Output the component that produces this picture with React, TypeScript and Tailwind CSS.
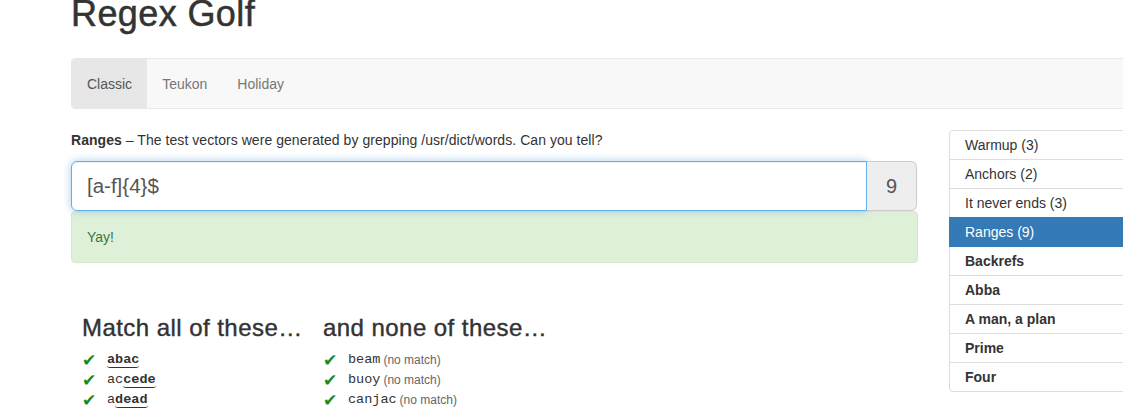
const levels = [
  { name: "Warmup (3)", solved: true },
  { name: "Anchors (2)", solved: true },
  { name: "It never ends (3)", solved: true },
  { name: "Ranges (9)", solved: true, active: true },
  { name: "Backrefs" },
  { name: "Abba" },
  { name: "A man, a plan" },
  { name: "Prime" },
  { name: "Four" },
];

const matches = [
  { pre: "", hit: "abac" },
  { pre: "ac", hit: "cede" },
  { pre: "a", hit: "dead" },
];

const nonMatches = ["beam", "buoy", "canjac"];

export default function App() {
  return (
    <div className="h-[408px] w-[1123px] overflow-hidden bg-white font-['Liberation_Sans',Arial,sans-serif] text-[14px] text-[#333]">
      <div className="ml-[56px] w-[1170px] px-[15px]">
        <h1 className="mt-[-6px] text-[36px] leading-[40px] tracking-[0.4px] text-[#333] [-webkit-text-stroke:0.5px_#333]">
          Regex Golf
        </h1>

        <nav className="mt-[24px] flex h-[51px] rounded-[4px] border border-[#e7e7e7] bg-[#f8f8f8]">
          <NavLink label="Classic" active />
          <NavLink label="Teukon" />
          <NavLink label="Holiday" />
        </nav>

        <div className="mt-[21px] flex">
          <div className="w-[847px] shrink-0">
            <p className="leading-[20px] tracking-[0.05px]">
              <b>Ranges</b> – The test vectors were generated by grepping /usr/dict/words. Can you tell?
            </p>

            <div className="mt-[11px] flex h-[50px] w-[846px]">
              <div className="flex flex-1 items-center rounded-l-[6px] border border-[#66afe9] bg-white px-[15px] text-[20.5px] text-[#555] shadow-[inset_0_1px_1px_rgba(0,0,0,0.075),0_0_8px_rgba(102,175,233,0.6)]">
                [a-f]{"{4}"}$
              </div>
              <div className="flex w-[50px] items-center justify-center rounded-r-[6px] border border-l-0 border-[#ccc] bg-[#eee] text-[20px] text-[#555]">
                9
              </div>
            </div>

            <div className="h-[52px] rounded-[4px] border border-[#d6e9c6] bg-[#dff0d8] px-[15px] py-[15px] leading-[20px] text-[#3c763d]">
              Yay!
            </div>

            <div className="mt-[51px] flex pl-[11px]">
              <div className="w-[241px]">
                <h3 className="text-[24px] leading-[27px] tracking-[0.45px] text-[#333] [-webkit-text-stroke:0.4px_#333]">
                  Match all of these…
                </h3>
                <ul className="mt-[9px]">
                  {matches.map((m) => (
                    <li key={m.pre + m.hit} className="flex h-[20px] items-center">
                      <Check />
                      <span className="font-['Liberation_Mono',monospace] text-[13.5px] leading-[18px] text-[#333]">
                        {m.pre}
                        <span className="rounded-b-[3px] border-b border-[#333] font-bold">{m.hit}</span>
                      </span>
                    </li>
                  ))}
                </ul>
              </div>
              <div>
                <h3 className="text-[24px] leading-[27px] tracking-[0.45px] text-[#333] [-webkit-text-stroke:0.4px_#333]">
                  and none of these…
                </h3>
                <ul className="mt-[9px]">
                  {nonMatches.map((w) => (
                    <li key={w} className="flex h-[20px] items-center">
                      <Check />
                      <span className="font-['Liberation_Mono',monospace] text-[13.5px] leading-[18px] text-[#333]">{w}</span>
                      <span className="ml-[3px] text-[12px] leading-[18px] text-[#666]">(no match)</span>
                    </li>
                  ))}
                </ul>
              </div>
            </div>
          </div>

          <div className="ml-[31px] w-[263px] shrink-0">
            <ul>
              {levels.map((l, i) => (
                <li
                  key={l.name}
                  className={
                    "-mb-px border px-[15px] py-[4px] leading-[20px] " +
                    (i === 0 ? "rounded-t-[4px] " : "") +
                    (i === levels.length - 1 ? "rounded-b-[4px] " : "") +
                    (l.active
                      ? "relative z-10 border-[#337ab7] bg-[#337ab7] text-white"
                      : "border-[#ddd] bg-white " + (l.solved ? "text-[#333]" : "font-bold text-[#333]"))
                  }
                >
                  {l.name}
                </li>
              ))}
            </ul>
          </div>
        </div>
      </div>
    </div>
  );
}

function NavLink({ label, active }: { label: string; active?: boolean }) {
  return (
    <a
      className={
        "flex items-center px-[15px] leading-[20px] " +
        (active ? "rounded-l-[4px] bg-[#e7e7e7] text-[#555]" : "text-[#777]")
      }
    >
      {label}
    </a>
  );
}

function Check() {
  return (
    <span className="w-[25px] font-['DejaVu_Sans',sans-serif] text-[17px] leading-[18px] text-[#1a8a1a]">✔</span>
  );
}
